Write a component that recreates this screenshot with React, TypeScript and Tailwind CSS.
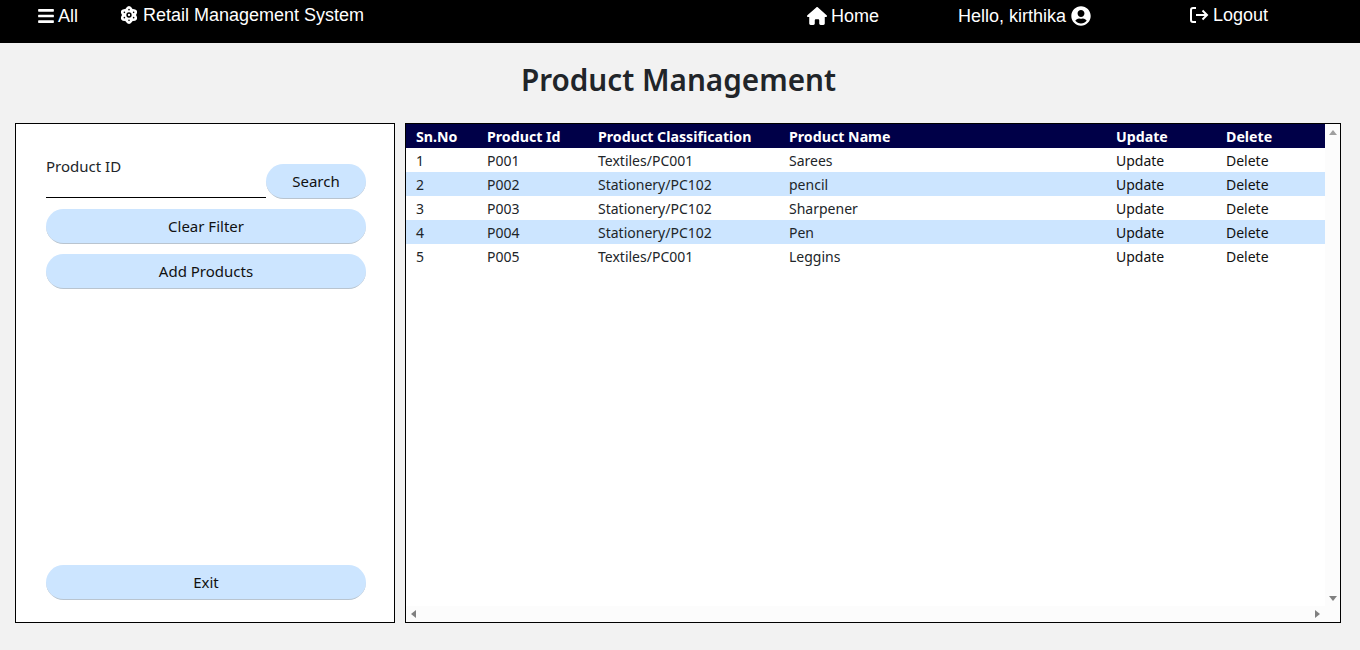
import { FaBars, FaUserCircle } from "react-icons/fa";
import { FaHouse } from "react-icons/fa6";

const rows = [
  { sn: 1, id: "P001", cls: "Textiles/PC001", name: "Sarees" },
  { sn: 2, id: "P002", cls: "Stationery/PC102", name: "pencil" },
  { sn: 3, id: "P003", cls: "Stationery/PC102", name: "Sharpener" },
  { sn: 4, id: "P004", cls: "Stationery/PC102", name: "Pen" },
  { sn: 5, id: "P005", cls: "Textiles/PC001", name: "Leggins" },
];

const pill =
  "h-[35px] rounded-[18px] bg-[#cce5ff] border-b border-[#b9c4cf] text-[15px] text-[#111]";
const th = "pl-[10px] pt-[2px] leading-[22px] font-bold text-[14.2px]";
const td = "pl-[10px] pt-[2px] leading-[22px]";

function AtomIcon() {
  return (
    <svg viewBox="-9 -10 18 20" className="w-[16px] h-[18px]">
      <g fill="#fff">
        <ellipse rx="10" ry="5.4" transform="rotate(90)" />
        <ellipse rx="10" ry="5.4" transform="rotate(30)" />
        <ellipse rx="10" ry="5.4" transform="rotate(150)" />
      </g>
      <circle r="3" fill="#000" />
      <circle r="1.3" fill="#fff" />
      <g fill="#000">
        <circle cx="0" cy="-6" r="0.9" />
        <circle cx="0" cy="6" r="0.9" />
        <circle cx="-5.2" cy="-3" r="0.9" />
        <circle cx="5.2" cy="-3" r="0.9" />
        <circle cx="-5.2" cy="3" r="0.9" />
        <circle cx="5.2" cy="3" r="0.9" />
      </g>
    </svg>
  );
}

function LogoutIcon() {
  return (
    <svg viewBox="0 0 20 18" className="w-[20px] h-[18px]" fill="none" stroke="#fff" strokeWidth="2">
      <path d="M7 2H4a2 2 0 0 0-2 2v10a2 2 0 0 0 2 2h3" />
      <path d="M7 9h11" />
      <path d="M13.5 4.5 18 9l-4.5 4.5" />
    </svg>
  );
}

function Header() {
  return (
    <header className="h-[43px] bg-black text-white flex items-start font-['Liberation_Sans',sans-serif] text-[18px] leading-[32px]">
      <div className="w-[121px] pl-[38px] flex items-center gap-[4px]">
        <FaBars className="w-[16px] h-[18px]" />
        <span>All</span>
      </div>
      <div className="w-[686px] flex items-center gap-[6px] leading-[30px]">
        <AtomIcon />
        <span>Retail Management System</span>
      </div>
      <div className="w-[151px] flex items-center gap-[4px]">
        <FaHouse className="w-[20px] h-[18px]" />
        <span>Home</span>
      </div>
      <div className="w-[231px] flex items-center gap-[5px]">
        <span>Hello, kirthika</span>
        <FaUserCircle className="w-[20px] h-[20px]" />
      </div>
      <div className="flex items-center gap-[4px] leading-[30px]">
        <LogoutIcon />
        <span>Logout</span>
      </div>
    </header>
  );
}

function Sidebar() {
  return (
    <aside className="w-[380px] border border-black bg-white flex flex-col pl-[30px] pr-[28px] pt-[32px] pb-[22px]">
      <div className="flex items-start">
        <div className="w-[220px] h-[42px] border-b border-black text-[15px] leading-[20px] text-[#212529]">
          Product ID
        </div>
        <button className={`${pill} w-[100px] mt-[8px]`}>Search</button>
      </div>
      <button className={`${pill} mt-[10px]`}>Clear Filter</button>
      <button className={`${pill} mt-[10px]`}>Add Products</button>
      <button className={`${pill} mt-auto`}>Exit</button>
    </aside>
  );
}

function ProductTable() {
  return (
    <section className="relative flex-1 border border-black bg-white overflow-hidden">
      <table className="w-[919px] table-fixed text-[14px] text-[#212529]">
        <thead className="bg-[#000048] text-white text-left">
          <tr className="h-[24px]">
            <th className={`w-[71px] ${th}`}>Sn.No</th>
            <th className={`w-[111px] ${th}`}>Product Id</th>
            <th className={`w-[191px] ${th}`}>Product Classification</th>
            <th className={`w-[327px] ${th}`}>Product Name</th>
            <th className={`w-[110px] ${th}`}>Update</th>
            <th className={th}>Delete</th>
          </tr>
        </thead>
        <tbody>
          {rows.map((r) => (
            <tr key={r.sn} className={`h-[24px] ${r.sn % 2 === 0 ? "bg-[#cce5ff]" : "bg-white"}`}>
              <td className={td}>{r.sn}</td>
              <td className={td}>{r.id}</td>
              <td className={td}>{r.cls}</td>
              <td className={td}>{r.name}</td>
              <td className={`${td} text-[#111]`}>Update</td>
              <td className={`${td} text-[#111]`}>Delete</td>
            </tr>
          ))}
        </tbody>
      </table>
      {/* fake scrollbars */}
      <div className="absolute top-0 right-0 bottom-0 w-[15px] bg-[#fcfcfc] flex flex-col items-center justify-between pt-[6px] pb-[21px]">
        <div className="w-0 h-0 border-x-[4px] border-x-transparent border-b-[5px] border-b-[#a0a0a0]" />
        <div className="w-0 h-0 border-x-[4px] border-x-transparent border-t-[5px] border-t-[#808080]" />
      </div>
      <div className="absolute left-0 right-0 bottom-0 h-[16px] bg-[#fcfcfc] flex items-center justify-between pl-[5px] pr-[20px]">
        <div className="w-0 h-0 border-y-[4px] border-y-transparent border-r-[5px] border-r-[#808080]" />
        <div className="w-0 h-0 border-y-[4px] border-y-transparent border-l-[5px] border-l-[#808080]" />
      </div>
    </section>
  );
}

export default function App() {
  return (
    <div className="w-[1360px] h-[650px] bg-[#f2f2f2] overflow-hidden font-['Noto_Sans',sans-serif]">
      <Header />
      <h1 className="h-[80px] pt-[16px] pr-[3px] text-center text-[29.7px] leading-[42px] font-semibold text-[#212529]">
        Product Management
      </h1>
      <main className="h-[500px] pl-[15px] pr-[19px] flex gap-[10px]">
        <Sidebar />
        <ProductTable />
      </main>
    </div>
  );
}
